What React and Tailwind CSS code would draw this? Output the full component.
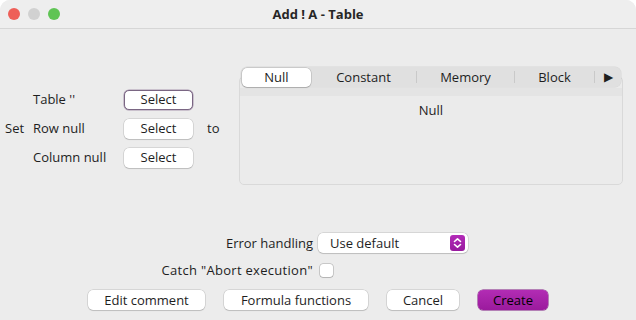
import React from "react";

const btn =
  "bg-white rounded-[5px] shadow-[0_0_0_0.5px_rgba(0,0,0,0.18),0_1px_1px_rgba(0,0,0,0.12)] flex items-center justify-center h-[20px]";

const SelectButton = ({ focused }) => (
  <div
    className={
      focused
        ? "w-[69px] h-[20px] bg-white rounded-[5px] border border-[#7a6683] shadow-[0_0_0_0.5px_#a796ad] flex items-center justify-center"
        : `w-[69px] ${btn}`
    }
  >
    Select
  </div>
);

const Separator = () => <div className="w-px h-[12px] bg-[#c9c9c9]" />;

export default function App() {
  const rows = [
    { label: "Table ''", focused: true },
    { label: "Row null" },
    { label: "Column null" },
  ];

  return (
    <div className="w-[636px] h-[320px] bg-white">
      <div className="w-full h-full bg-[#ececec] rounded-t-[10px] overflow-hidden flex flex-col font-['Open_Sans',sans-serif] text-[13px] text-[#1e1e1e] leading-none">
        {/* title bar */}
        <div className="h-[29px] shrink-0 grid grid-cols-[1fr_auto_1fr] items-center bg-[#eeeeee] border-b border-[#d6d6d6]">
          <div className="flex items-center gap-[8px] pl-[8px]">
            <div className="w-[12px] h-[12px] rounded-full bg-[#ee5f58]" />
            <div className="w-[12px] h-[12px] rounded-full bg-[#d1d1d1]" />
            <div className="w-[12px] h-[12px] rounded-full bg-[#5fc454]" />
          </div>
          <div className="font-bold text-[#262626]">Add ! A - Table</div>
          <div />
        </div>

        {/* top section */}
        <div className="flex items-start mt-[38px]">
          <div className="flex items-center mt-[18px]">
            <div className="w-[33px] pl-[5px]">Set</div>
            <div className="flex flex-col">
              {rows.map((r) => (
                <div key={r.label} className="h-[29px] flex items-center">
                  <div className="w-[91px]">{r.label}</div>
                  <SelectButton focused={r.focused} />
                </div>
              ))}
            </div>
            <div className="ml-[14px] w-[32px]">to</div>
          </div>

          {/* tabbed panel */}
          <div className="w-[384px] h-[118px] flex flex-col">
            <div className="relative z-10 mx-[2px] h-[20px] rounded-[6px] bg-[#e0e0e0] shadow-[0_0_0_0.5px_rgba(0,0,0,0.08)] flex items-center">
              <div className="w-[69px] h-[19px] ml-px bg-white rounded-[5px] shadow-[0_0_0_0.5px_rgba(0,0,0,0.2),0_1px_1px_rgba(0,0,0,0.15)] flex items-center justify-center">
                Null
              </div>
              <div className="w-[105px] flex items-center justify-center">Constant</div>
              <Separator />
              <div className="w-[97px] flex items-center justify-center">Memory</div>
              <Separator />
              <div className="w-[79px] flex items-center justify-center">Block</div>
              <Separator />
              <div className="flex-1 flex items-center justify-center text-[12px]">▶</div>
            </div>
            <div className="flex-1 -mt-[11px] border border-[#d9d9d9] rounded-[5px] bg-[#ebebeb] pt-[11px] flex flex-col">
              <div className="h-[8px] bg-[#e4e4e4]" />
              <div className="mt-[8px] text-center">Null</div>
            </div>
          </div>
        </div>

        {/* options */}
        <div className="flex items-center mt-[48px] h-[20px]">
          <div className="w-[313px] text-right">Error handling</div>
          <div className={`ml-[5px] w-[150px] ${btn} justify-between! pl-[12px] pr-[3px]`}>
            <span>Use default</span>
            <div className="w-[15px] h-[16px] rounded-[3px] bg-gradient-to-b from-[#b32bb8] to-[#981a9e] flex items-center justify-center">
              <svg width="9" height="12" viewBox="0 0 9 12" fill="none" stroke="white" strokeWidth="1.6" strokeLinecap="round" strokeLinejoin="round">
                <path d="M1.5 4.5 L4.5 1.8 L7.5 4.5" />
                <path d="M1.5 7.5 L4.5 10.2 L7.5 7.5" />
              </svg>
            </div>
          </div>
        </div>
        <div className="flex items-center mt-[7px] h-[20px]">
          <div className="w-[313px] text-right tracking-[0.3px]">Catch "Abort execution"</div>
          <div className="ml-[7px] w-[13px] h-[13px] bg-white rounded-[3px] shadow-[0_0_0_0.5px_rgba(0,0,0,0.3),0_1px_1px_rgba(0,0,0,0.1)]" />
        </div>

        {/* buttons */}
        <div className="flex justify-center gap-[19px] mt-[10px]">
          <div className={`w-[117px] ${btn}`}>Edit comment</div>
          <div className={`w-[144px] ${btn}`}>Formula functions</div>
          <div className={`w-[72px] ${btn}`}>Cancel</div>
          <div className="w-[70px] h-[20px] rounded-[5px] bg-gradient-to-b from-[#b22cb4] to-[#9b1a9d] shadow-[0_0_0_0.5px_#7d1580] flex items-center justify-center text-black">
            Create
          </div>
        </div>
      </div>
    </div>
  );
}
